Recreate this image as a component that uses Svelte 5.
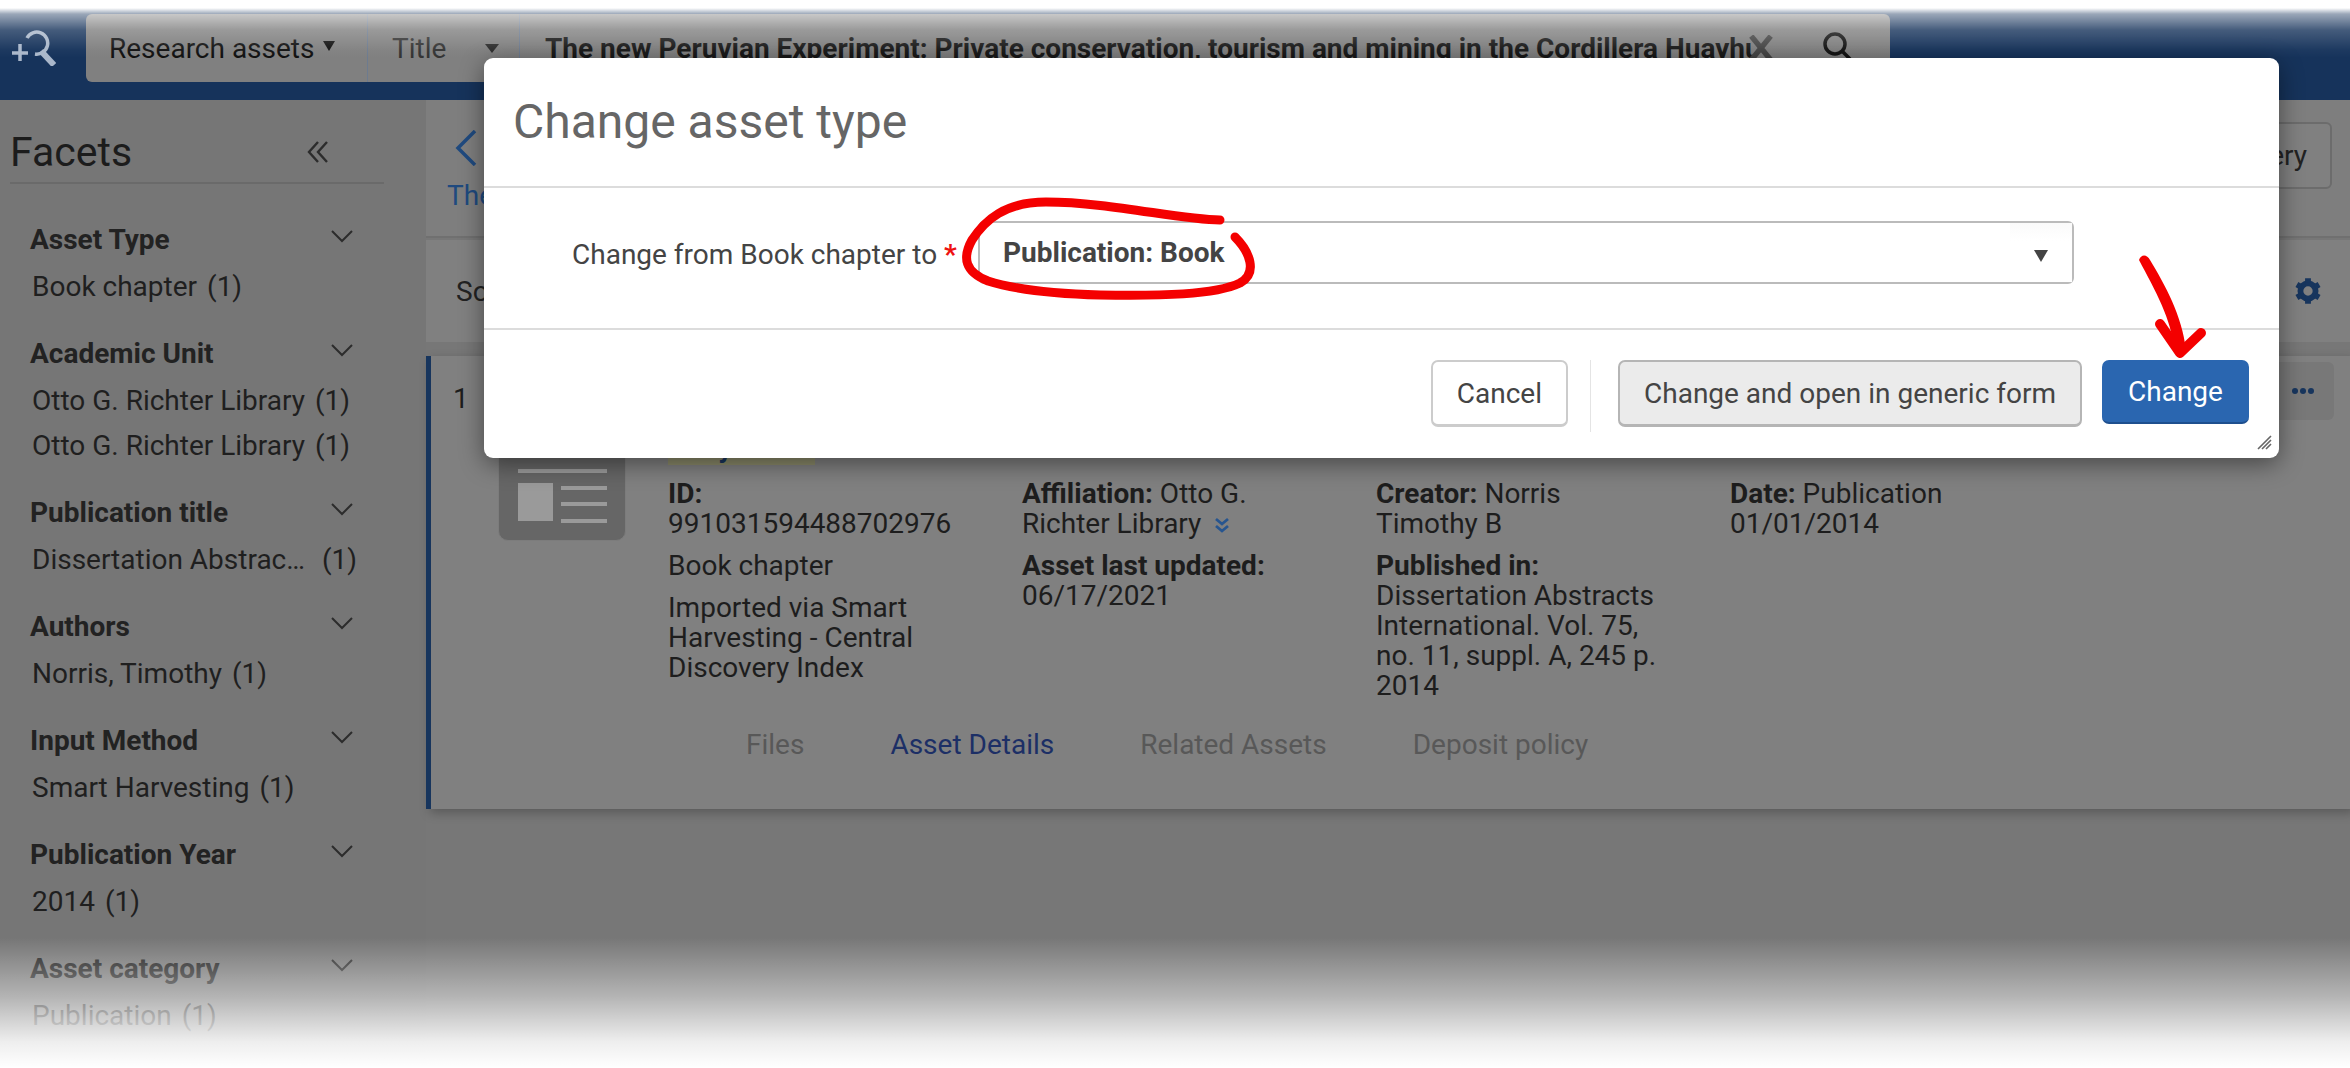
<script lang="ts">
	const facets = [
		{ title: 'Asset Type', values: [{ label: 'Book chapter', count: 1 }] },
		{
			title: 'Academic Unit',
			values: [
				{ label: 'Otto G. Richter Library', count: 1 },
				{ label: 'Otto G. Richter Library', count: 1 },
			],
		},
		{ title: 'Publication title', values: [{ label: 'Dissertation Abstrac…', count: 1, wide: true }] },
		{ title: 'Authors', values: [{ label: 'Norris, Timothy', count: 1 }] },
		{ title: 'Input Method', values: [{ label: 'Smart Harvesting', count: 1 }] },
		{ title: 'Publication Year', values: [{ label: '2014', count: 1 }] },
		{ title: 'Asset category', values: [{ label: 'Publication', count: 1 }] },
	];

	const tabs = ['Files', 'Asset Details', 'Related Assets', 'Deposit policy'];
</script>

<div class="page">
	<header class="topbar">
		<svg class="logo" viewBox="0 0 44 36" width="44" height="36" fill="none" stroke="#a9b7ca" stroke-width="3.5">
			<path d="M0 23h16M8 14v17" />
			<path d="M15 8a11 11 0 1 1 8 16" />
			<path d="M29 21l13 14" stroke-width="6" />
		</svg>
		<div class="search">
			<div class="scope">
				Research assets
				<svg viewBox="0 0 12 10" width="12" height="10"><path d="M0 0h12L6 10z" fill="#111" /></svg>
			</div>
			<div class="field">
				<span>Title</span>
				<svg viewBox="0 0 14 9" width="14" height="9"><path d="M0 0h14L7 9z" fill="#2b2b2b" /></svg>
			</div>
			<div class="query">
				<span class="query-text">The new Peruvian Experiment: Private conservation, tourism and mining in the Cordillera Huayhuash</span>
				<svg class="clear" viewBox="0 0 24 24" width="26" height="26" fill="none" stroke="#444" stroke-width="5">
					<path d="M3 1l18 22M21 1L3 23" />
				</svg>
				<svg class="lens" viewBox="0 0 30 30" width="30" height="30" fill="none" stroke="#111" stroke-width="3.5">
					<circle cx="13" cy="13" r="10" />
					<path d="M20 20l8 8" />
				</svg>
			</div>
		</div>
	</header>

	<div class="body">
		<aside class="sidebar">
			<div class="sidebar-head">
				<h2>Facets</h2>
				<svg viewBox="0 0 22 22" width="22" height="22" fill="none" stroke="#2c2c2c" stroke-width="2.4">
					<path d="M11 1L2 11l9 10M20 1L11 11l9 10" />
				</svg>
			</div>
			{#each facets as facet}
				<section class="facet">
					<div class="facet-title">
						<span>{facet.title}</span>
						<svg viewBox="0 0 22 13" width="22" height="13" fill="none" stroke="#2c2c2c" stroke-width="2">
							<path d="M1 1l10 10L21 1" />
						</svg>
					</div>
					{#each facet.values as value}
						<div class="facet-value" class:wide={value.wide}>
							<span>{value.label}</span>
							<span>({value.count})</span>
						</div>
					{/each}
				</section>
			{/each}
		</aside>

		<main class="content">
			<div class="crumbs">
				<div class="crumb-left">
					<svg viewBox="0 0 22 36" width="22" height="36" fill="none" stroke="#1f4a7f" stroke-width="3.5">
						<path d="M20 1L3 18l17 17" />
					</svg>
					<div class="crumb-title">The new Peruvian Experiment</div>
				</div>
				<button class="query-btn">Save query</button>
			</div>

			<div class="toolbar">
				<span>Sort by</span>
				<svg viewBox="0 0 24 24" width="28" height="30" fill="none" stroke="#17355d" stroke-width="5">
					<circle cx="12" cy="12" r="6.5" />
					<path d="M12 1v4M12 19v4M2.5 6.5l3.5 2M18 15.5l3.5 2M2.5 17.5l3.5-2M18 8.5l3.5-2" />
				</svg>
			</div>

			<article class="card">
				<div class="card-num">1</div>
				<div class="card-main">
					<div class="thumb">
						<i class="bar-top"></i>
						<i class="bar-block"></i>
						<i class="bar-a"></i>
						<i class="bar-b"></i>
						<i class="bar-c"></i>
					</div>
					<div class="details">
						<div class="card-title"><mark>Huayhuash</mark></div>
						<div class="cols">
							<div class="col">
								<p><b>ID:</b><br />991031594488702976</p>
								<p>Book chapter</p>
								<p>Imported via Smart Harvesting - Central Discovery Index</p>
							</div>
							<div class="col">
								<p>
									<b>Affiliation:</b> Otto G. Richter Library
									<svg class="more" viewBox="0 0 16 16" width="16" height="16" fill="none" stroke="#27558f" stroke-width="2.8">
										<path d="M2 2l6 5 6-5M2 9l6 5 6-5" />
									</svg>
								</p>
								<p><b>Asset last updated:</b><br />06/17/2021</p>
							</div>
							<div class="col">
								<p><b>Creator:</b> Norris<br />Timothy B</p>
								<p><b>Published in:</b><br />Dissertation Abstracts International. Vol. 75, no. 11, suppl. A, 245 p.<br />2014</p>
							</div>
							<div class="col">
								<p><b>Date:</b> Publication 01/01/2014</p>
							</div>
						</div>
						<nav class="tabs">
							{#each tabs as tab, i}
								<span class:active={i === 1}>{tab}</span>
							{/each}
						</nav>
					</div>
				</div>
				<div class="card-menu"><i></i><i></i><i></i></div>
			</article>
		</main>
	</div>

	<div class="fade-top"></div>
	<div class="fade-bottom"></div>

	<div class="modal">
		<div class="modal-head">Change asset type</div>
		<div class="modal-body">
			<label for="asset-type">Change from Book chapter to <em>*</em></label>
			<div class="select" id="asset-type">
				<span>Publication: Book</span>
				<div class="select-arrow">
					<svg viewBox="0 0 14 12" width="14" height="12"><path d="M0 0h14L7 12z" fill="#444" /></svg>
				</div>
			</div>
		</div>
		<div class="modal-foot">
			<button class="btn">Cancel</button>
			<div class="sep"></div>
			<button class="btn grey">Change and open in generic form</button>
			<button class="btn primary">Change</button>
		</div>
		<svg class="grip" viewBox="0 0 16 16" width="16" height="16" stroke="#666" stroke-width="1.6">
			<path d="M2 15L15 2M6 15L15 6M10 15l5-5" />
		</svg>
	</div>

	<svg class="marks" viewBox="0 0 2350 1068" width="2350" height="1068" fill="none" stroke="#f40000" stroke-linecap="round" stroke-linejoin="round">
		<path
			stroke-width="9"
			d="M1220 220C1180 220 1110 202 1046 202C1005 202 985 220 972 240C962 258 965 272 988 281C1020 291 1060 294 1100 295C1160 296 1215 295 1240 283C1258 273 1250 252 1235 237"
		/>
		<path
			stroke="none"
			fill="#f40000"
			d="M2139 260C2141 254 2147 254 2150 260C2165 285 2182 315 2186 350L2174 350C2172 320 2155 290 2139 260Z"
		/>
		<path stroke-width="10" d="M2160 324L2180 353L2201 333" />
	</svg>
</div>

<style>
	:global(body) {
		margin: 0;
		background: #fff;
	}

	.page {
		position: relative;
		width: 2350px;
		height: 1068px;
		overflow: hidden;
		background: #777;
		font-family: Roboto, 'Liberation Sans', sans-serif;
		font-size: 28px;
		color: #1d1d1d;
	}

	/* === TOP BAR === */
	.topbar {
		display: flex;
		align-items: flex-start;
		height: 100px;
		box-sizing: border-box;
		padding: 14px 0 0 12px;
		background: #16335b;
	}

	.logo {
		margin: 16px 30px 0 0;
	}

	.search {
		display: flex;
		width: 1804px;
		height: 68px;
		background: #808080;
		border-radius: 6px;
		line-height: 68px;
	}

	.scope {
		width: 281px;
		box-sizing: border-box;
		padding: 1px 0 0 23px;
		white-space: nowrap;
		color: #111;
	}

	.scope svg {
		margin-left: 2px;
		vertical-align: 7px;
	}

	.field {
		display: flex;
		align-items: center;
		justify-content: space-between;
		width: 153px;
		box-sizing: border-box;
		padding: 0 20px 0 24px;
		border-left: 1px solid #6d7b8f;
		border-right: 1px solid #6d7b8f;
		color: #333;
	}

	.field span {
		padding-top: 2px;
	}

	.query {
		flex: 1;
		display: flex;
		align-items: center;
		min-width: 0;
		padding-left: 25px;
	}

	.query-text {
		width: 1209px;
		padding-top: 2px;
		overflow: hidden;
		white-space: nowrap;
		font-weight: 700;
		color: #171717;
	}

	.clear {
		margin: 0 0 0 -6px;
	}

	.lens {
		margin-left: 48px;
		margin-top: -4px;
	}

	/* === BODY === */
	.body {
		display: flex;
		height: 968px;
	}

	.sidebar {
		width: 426px;
		flex: none;
		box-sizing: border-box;
		padding: 30px 73px 0 10px;
		background: #767676;
	}

	.sidebar-head {
		display: flex;
		align-items: center;
		justify-content: space-between;
		padding: 0 55px 8px 0;
		border-bottom: 2px solid #6a6a6a;
		margin-bottom: 40px;
		margin-right: -31px;
		line-height: 44px;
	}

	.sidebar-head h2 {
		margin: 0;
		font-size: 41px;
		font-weight: 400;
		color: #1c1c1c;
	}

	.facet {
		margin-bottom: 36px;
		padding-left: 20px;
	}

	.facet-title {
		display: flex;
		align-items: center;
		justify-content: space-between;
		height: 30px;
		font-weight: 700;
		color: #222;
	}

	.facet-title svg {
		margin-top: -6px;
	}

	.facet-value {
		display: flex;
		gap: 10px;
		margin: 18px -4px 0 2px;
		height: 30px;
		line-height: 30px;
		white-space: nowrap;
		color: #1f1f1f;
	}

	.facet-value + .facet-value {
		margin-top: 15px;
	}

	.facet-value.wide {
		justify-content: space-between;
	}

	.content {
		flex: 1;
		min-width: 0;
	}

	.crumbs {
		display: flex;
		align-items: flex-start;
		justify-content: space-between;
		height: 138px;
		box-sizing: border-box;
		padding: 30px 18px 0 0;
		background: #7e7e7e;
		border-bottom: 2px solid #707070;
	}

	.crumb-left {
		display: flex;
		flex-direction: column;
		padding-left: 21px;
		color: #1f4a7f;
	}

	.crumb-left svg {
		margin: 0 0 13px 8px;
	}

	.crumb-title {
		line-height: 34px;
		white-space: nowrap;
	}

	.query-btn {
		width: 290px;
		height: 67px;
		margin-top: -8px;
		padding: 0 23px 0 0;
		text-align: right;
		background: #808080;
		border: 2px solid #6c6c6c;
		border-radius: 6px;
		font: inherit;
		color: #222;
	}

	.toolbar {
		display: flex;
		align-items: center;
		justify-content: space-between;
		height: 102px;
		box-sizing: border-box;
		margin-top: 2px;
		padding: 0 28px 0 30px;
		background: #808080;
		color: #222;
	}

	.card {
		position: relative;
		display: flex;
		height: 453px;
		margin-top: 14px;
		box-sizing: border-box;
		padding-top: 28px;
		background: #808080;
		border-left: 5px solid #17355d;
		box-shadow: 4px 4px 10px rgba(0, 0, 0, 0.25);
	}

	.card-num {
		width: 67px;
		padding-left: 22px;
		box-sizing: border-box;
		line-height: 30px;
		color: #1d1d1d;
	}

	.card-main {
		display: flex;
		gap: 42px;
		margin-top: 29px;
	}

	.thumb {
		position: relative;
		width: 128px;
		height: 128px;
		box-sizing: border-box;
		background: #666;
		border: 1px solid #7c7c7c;
		border-radius: 0 0 10px 10px;
	}

	.thumb i {
		position: absolute;
		background: #9a9a9a;
	}

	.bar-top { left: 19px; top: 55px; width: 89px; height: 4px; }
	.bar-block { left: 19px; top: 69px; width: 35px; height: 38px; }
	.bar-a { left: 62px; top: 72px; width: 46px; height: 4px; }
	.bar-b { left: 62px; top: 88px; width: 46px; height: 4px; }
	.bar-c { left: 62px; top: 105px; width: 46px; height: 4px; }

	.details {
		margin-top: 20px;
	}

	.card-title {
		height: 32px;
		line-height: 30px;
		font-weight: 700;
	}

	mark {
		display: inline-block;
		height: 32px;
		padding-right: 6px;
		background: #8b8a6a;
		color: #17355d;
	}

	.cols {
		display: grid;
		grid-template-columns: repeat(4, 354px);
		margin-top: 14px;
		height: 240px;
		line-height: 30px;
	}

	.col {
		width: 285px;
		color: #1d1d1d;
	}

	.col p {
		margin: 0 0 12px;
	}

	.more {
		margin-left: 6px;
		vertical-align: 0;
	}

	.tabs {
		display: flex;
		margin: 11px 0 0 78px;
		gap: 86px;
		line-height: 30px;
		color: #585858;
	}

	.tabs .active {
		color: #1c2f66;
	}

	.card-menu {
		position: absolute;
		right: 16px;
		top: 6px;
		display: flex;
		gap: 2px;
		align-items: center;
		justify-content: center;
		width: 62px;
		height: 58px;
		background: #787878;
		border-radius: 6px;
	}

	.card-menu i {
		width: 6px;
		height: 6px;
		border-radius: 50%;
		background: #17355d;
	}

	/* === FADES === */
	.fade-top,
	.fade-bottom {
		position: absolute;
		left: 0;
		right: 0;
		pointer-events: none;
	}

	.fade-top {
		top: 0;
		height: 58px;
		background: linear-gradient(#fff 0, #fff 8px, rgba(255, 255, 255, 0.57) 14px, rgba(255, 255, 255, 0.2) 30px, rgba(255, 255, 255, 0.03) 50px, rgba(255, 255, 255, 0));
	}

	.fade-bottom {
		top: 938px;
		height: 130px;
		background: linear-gradient(rgba(255, 255, 255, 0), rgba(255, 255, 255, 0.45) 45%, rgba(255, 255, 255, 0.88) 80%, #fff);
	}

	/* === MODAL === */
	.modal {
		position: absolute;
		left: 484px;
		top: 58px;
		width: 1795px;
		height: 400px;
		display: flex;
		flex-direction: column;
		box-sizing: border-box;
		background: #fff;
		border-radius: 9px;
		box-shadow: 0 6px 24px rgba(0, 0, 0, 0.45);
		color: #444;
	}

	.modal-head {
		height: 130px;
		box-sizing: border-box;
		padding: 36px 0 0 29px;
		border-bottom: 2px solid #dcdcdc;
		font-size: 48px;
		line-height: 56px;
		color: #666;
	}

	.modal-body {
		display: flex;
		align-items: center;
		height: 142px;
		box-sizing: border-box;
		padding: 0 0 12px 88px;
		border-bottom: 2px solid #dcdcdc;
	}

	.modal-body label {
		width: 406px;
		flex: none;
		margin-top: 5px;
		white-space: nowrap;
	}

	.modal-body em {
		font-style: normal;
		font-weight: 700;
		color: #e11;
	}

	.select {
		display: flex;
		align-items: center;
		justify-content: space-between;
		width: 1096px;
		height: 63px;
		box-sizing: border-box;
		padding-left: 23px;
		border: 2px solid #bbb;
		border-radius: 6px;
		font-weight: 700;
	}

	.select-arrow {
		display: flex;
		align-items: center;
		justify-content: center;
		width: 62px;
		height: 100%;
		padding-top: 8px;
		box-sizing: border-box;
		background: linear-gradient(#fafafa, #fff 30%);
	}

	.modal-foot {
		display: flex;
		justify-content: flex-end;
		align-items: flex-start;
		gap: 20px;
		padding: 30px 30px 0 0;
	}

	.btn {
		height: 67px;
		padding: 0 24px;
		background: #fff;
		border: 2px solid #ccc;
		border-bottom-width: 3px;
		border-radius: 7px;
		font: inherit;
		color: #444;
		white-space: nowrap;
	}

	.btn.grey {
		background: #ebebeb;
		border-color: #b5b5b5;
	}

	.btn.primary {
		width: 147px;
		height: 64px;
		padding: 0;
		background: #2a66b0;
		border: none;
		border-bottom: 2px solid #1e4f8e;
		color: #fff;
	}

	.sep {
		width: 1px;
		height: 72px;
		margin: 0 7px 0 2px;
		background: #e4e4e4;
	}

	.grip {
		position: absolute;
		right: 7px;
		bottom: 8px;
	}

	.marks {
		position: absolute;
		left: 0;
		top: 0;
		pointer-events: none;
	}
</style>
